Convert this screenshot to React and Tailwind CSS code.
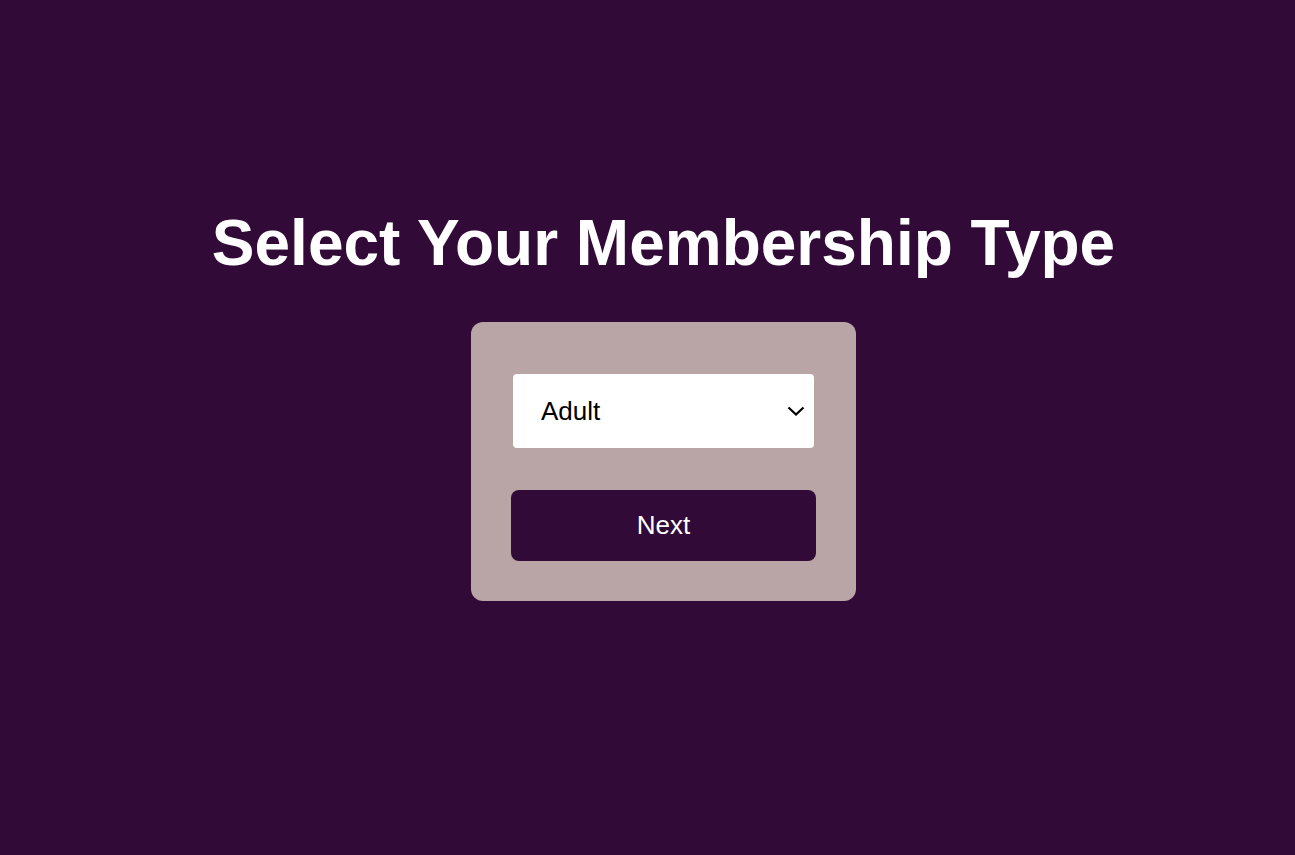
import React from "react";

export default function App() {
  return (
    <div className="min-h-[855px] w-full bg-[#320a38] flex flex-col items-center pt-[207px] pl-[32px]" style={{ fontFamily: '"Liberation Sans", Arial, sans-serif' }}>
      <h1 className="text-[64px] leading-[72px] font-bold text-white m-0">Select Your Membership Type</h1>
      <div className="mt-[43px] w-[385px] bg-[#b9a5a5] rounded-[12px] px-[40px] pt-[52px] pb-[40px] flex flex-col">
        <div className="relative mx-[2px] h-[74px] bg-white rounded-[4px] flex items-center">
          <select className="appearance-none w-full h-full bg-transparent pl-[28px] pr-[40px] text-[26px] text-black outline-none" style={{ fontFamily: '"Liberation Sans", Arial, sans-serif' }} defaultValue="Adult">
            <option>Adult</option>
            <option>Child</option>
            <option>Senior</option>
          </select>
          <svg className="absolute right-[9px] top-[32px] pointer-events-none" width="18" height="10" viewBox="0 0 18 10">
            <polyline points="1.5,1.5 9,8.5 16.5,1.5" fill="none" stroke="#000" strokeWidth="2.2" />
          </svg>
        </div>
        <button className="mt-[42px] h-[71px] w-full bg-[#320a38] rounded-[8px] text-white text-[26px]">Next</button>
      </div>
    </div>
  );
}
